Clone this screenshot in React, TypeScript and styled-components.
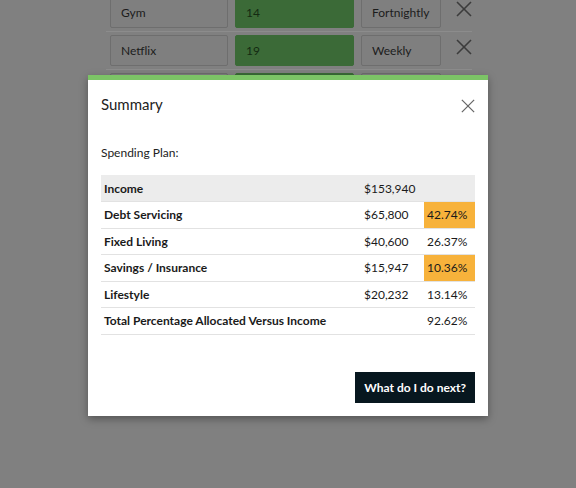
import React from 'react';
import styled, { createGlobalStyle } from 'styled-components';

const GlobalStyle = createGlobalStyle`
  html, body {
    margin: 0;
    padding: 0;
    background: #808080;
    font-family: Lato, "Open Sans", sans-serif;
  }
  #root {
    height: 488px;
  }
`;

const Page = styled.div`
  position: relative;
  width: 576px;
  height: 488px;
  overflow: hidden;
  background: #808080;
`;

const ExpenseList = styled.div`
  display: flex;
  flex-direction: column;
  margin: -6px 0 0 106px;
  width: 366px;
`;

const ExpenseRow = styled.div`
  display: flex;
  align-items: center;
  gap: 7px;
  padding: 3px 0 3px 4px;
  border-bottom: 1px solid #8c8c8c;
`;

const Cell = styled.div<{ $w: number; $green?: boolean }>`
  width: ${(p) => p.$w}px;
  height: 31px;
  box-sizing: border-box;
  display: flex;
  align-items: center;
  padding-left: 10px;
  font-size: 12px;
  color: ${(p) => (p.$green ? '#142a12' : '#1c1c1c')};
  background: ${(p) => (p.$green ? '#3b6a37' : '#7f7f7f')};
  border: 1px solid ${(p) => (p.$green ? '#3b6a37' : '#6e6e6e')};
  border-radius: 2px;
`;

const RemoveIcon = styled.svg`
  width: 16px;
  height: 16px;
  margin: -8px 0 0 8px;
  stroke: #3c3c3c;
  stroke-width: 1.6;
`;

const Modal = styled.div`
  position: absolute;
  left: 88px;
  top: 75px;
  width: 400px;
  height: 341px;
  box-sizing: border-box;
  background: #fff;
  border-top: 5px solid #7cc466;
  box-shadow: 0 3px 8px rgba(0, 0, 0, 0.35);
  display: flex;
  flex-direction: column;
  padding: 0 13px 13px 13px;
`;

const Header = styled.div`
  display: flex;
  align-items: center;
  justify-content: space-between;
  height: 48px;
`;

const Title = styled.h2`
  margin: 0;
  font-size: 15px;
  font-weight: 400;
  color: #222;
`;

const CloseIcon = styled.svg`
  width: 14px;
  height: 14px;
  stroke: #666;
  stroke-width: 1.5;
  margin-right: 0;
  margin-top: 4px;
`;

const Label = styled.p`
  margin: 17px 0 0 0;
  font-size: 12px;
  color: #222;
  height: 30px;
`;

const Table = styled.table`
  width: 100%;
  border-collapse: collapse;
  font-size: 12px;
  color: #1a1a1a;
`;

const Row = styled.tr<{ $shade?: boolean }>`
  background: ${(p) => (p.$shade ? '#ececec' : '#fff')};
  border-bottom: 1px solid #e2e2e2;
  height: 26.5px;
`;

const NameCell = styled.td`
  font-weight: 700;
  padding: 0 3px;
`;

const AmountCell = styled.td`
  width: 60px;
  padding: 0;
`;

const PercentCell = styled.td<{ $warn?: boolean }>`
  width: 51px;
  padding: 0 0 0 3px;
  box-sizing: border-box;
  background: ${(p) => (p.$warn ? '#f7b23b' : 'transparent')};
`;

const Footer = styled.div`
  margin-top: auto;
  display: flex;
  justify-content: flex-end;
`;

const NextButton = styled.button`
  background: #07171f;
  color: #fff;
  border: none;
  font-family: Lato, "Open Sans", sans-serif;
  font-size: 12px;
  font-weight: 700;
  height: 31px;
  padding: 0 9px;
  cursor: pointer;
`;

const expenses = [
  { name: 'Gym', amount: '14', freq: 'Fortnightly' },
  { name: 'Netflix', amount: '19', freq: 'Weekly' },
  { name: '', amount: '', freq: '' },
];

const rows = [
  { name: 'Income', amount: '$153,940', pct: '', shade: true },
  { name: 'Debt Servicing', amount: '$65,800', pct: '42.74%', warn: true },
  { name: 'Fixed Living', amount: '$40,600', pct: '26.37%' },
  { name: 'Savings / Insurance', amount: '$15,947', pct: '10.36%', warn: true },
  { name: 'Lifestyle', amount: '$20,232', pct: '13.14%' },
  { name: 'Total Percentage Allocated Versus Income', amount: '', pct: '92.62%' },
];

const Cross = () => (
  <>
    <line x1="1" y1="1" x2="15" y2="15" />
    <line x1="15" y1="1" x2="1" y2="15" />
  </>
);

const App: React.FC = () => {
  return (
    <Page>
      <GlobalStyle />
      <ExpenseList>
        {expenses.map((e, i) => (
          <ExpenseRow key={i}>
            <Cell $w={118}>{e.name}</Cell>
            <Cell $w={119} $green>
              {e.amount}
            </Cell>
            <Cell $w={80}>{e.freq}</Cell>
            <RemoveIcon viewBox="0 0 16 16">
              <Cross />
            </RemoveIcon>
          </ExpenseRow>
        ))}
      </ExpenseList>

      <Modal>
        <Header>
          <Title>Summary</Title>
          <CloseIcon viewBox="0 0 16 16">
            <Cross />
          </CloseIcon>
        </Header>
        <Label>Spending Plan:</Label>
        <Table>
          <tbody>
            {rows.map((r) => (
              <Row key={r.name} $shade={r.shade}>
                <NameCell>{r.name}</NameCell>
                <AmountCell>{r.amount}</AmountCell>
                <PercentCell $warn={r.warn}>{r.pct}</PercentCell>
              </Row>
            ))}
          </tbody>
        </Table>
        <Footer>
          <NextButton>What do I do next?</NextButton>
        </Footer>
      </Modal>
    </Page>
  );
};

export default App;
